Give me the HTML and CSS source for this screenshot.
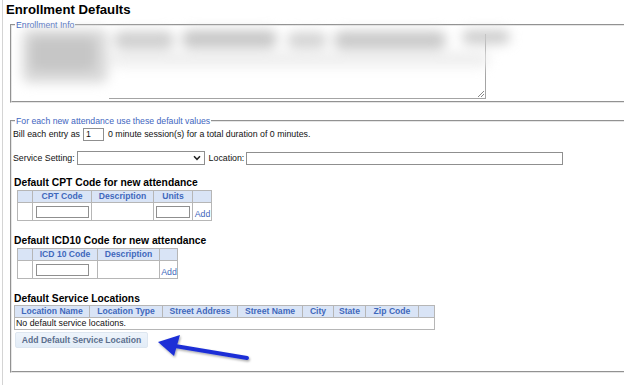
FILE: index.html
```html
<!DOCTYPE html>
<html>
<head>
<meta charset="utf-8">
<link rel="stylesheet" href="styles.css">
</head>
<body>
<div class="page">
  <h1 class="title">Enrollment Defaults</h1>
  <fieldset class="box box-info">
    <legend>Enrollment Info</legend>
    <div class="ta">
      <span class="grip"></span>
      <div class="mask"></div>
      <div class="mask-top"></div>
      <div class="blur">
        <span class="blob bl1"></span>
        <span class="blob bl2"></span>
        <span class="blob bl3"></span>
        <span class="blob bl4"></span>
        <span class="blob bl5"></span>
        <span class="blob bl6"></span>
        <span class="blob bl7"></span>
        <span class="blob bl8"></span>
      </div>
    </div>
  </fieldset>

  <fieldset class="box box-defaults">
    <legend>For each new attendance use these default values</legend>
    <div class="row row-bill">Bill each entry as <span class="inp inp-bill">1</span> 0 minute session(s) for a total duration of 0 minutes.</div>
    <div class="row row-svc">Service Setting: <span class="sel"><svg width="8" height="6" viewBox="0 0 8 6"><path d="M1 1.2 L4 4.3 L7 1.2" fill="none" stroke="#222" stroke-width="1.5"/></svg></span> Location: <span class="inp inp-loc"></span></div>

    <h2 class="sub sub-cpt">Default CPT Code for new attendance</h2>
    <table class="grid grid-cpt">
      <tr class="hd"><th class="c0"></th><th class="c1">CPT Code</th><th class="c2">Description</th><th class="c3">Units</th><th class="c4"></th></tr>
      <tr class="bd"><td></td><td><span class="inp inp-code"></span></td><td></td><td><span class="inp inp-units"></span></td><td class="add">Add</td></tr>
    </table>

    <h2 class="sub sub-icd">Default ICD10 Code for new attendance</h2>
    <table class="grid grid-icd">
      <tr class="hd"><th class="c0"></th><th class="i1">ICD 10 Code</th><th class="i2">Description</th><th class="i3"></th></tr>
      <tr class="bd"><td></td><td><span class="inp inp-code"></span></td><td></td><td class="add">Add</td></tr>
    </table>

    <h2 class="sub sub-loc">Default Service Locations</h2>
    <table class="grid grid-loc">
      <tr class="hd"><th class="l1">Location Name</th><th class="l2">Location Type</th><th class="l3">Street Address</th><th class="l4">Street Name</th><th class="l5">City</th><th class="l6">State</th><th class="l7">Zip Code</th><th class="l8"></th></tr>
      <tr><td colspan="8" class="empty">No default service locations.</td></tr>
    </table>
    <div class="btn">Add Default Service Location</div>
  </fieldset>

  <svg class="arrow" width="110" height="40" viewBox="0 0 110 40">
    <defs>
      <filter id="sh" x="-20%" y="-40%" width="140%" height="180%">
        <feDropShadow dx="1" dy="1.5" stdDeviation="1.2" flood-color="#000" flood-opacity="0.35"/>
      </filter>
    </defs>
    <g filter="url(#sh)">
      <path d="M94 27 L22 15" stroke="#1b2fd6" stroke-width="4" stroke-linecap="round" fill="none"/>
      <path d="M5 11 L27 4 L21 25 Z" fill="#1b2fd6"/>
    </g>
  </svg>
</div>
</body>
</html>
```

FILE: styles.css
```css
html, body {
  margin: 0;
  padding: 0;
  background: #fff;
  overflow: hidden;
}
body {
  font-family: "Liberation Sans", Arial, sans-serif;
  font-size: 8.8px;
  color: #111;
  width: 624px;
  height: 385px;
}
.page {
  position: relative;
  margin-left: 2px;
  border-left: 1px solid #d4d4d4;
  height: 385px;
  padding-top: 1px;
  box-sizing: border-box;
  overflow: hidden;
}
.title {
  margin: 0 0 0 3px;
  font-size: 13.2px;
  line-height: 18px;
  font-weight: bold;
  color: #000;
}
.box {
  margin: 0 0 0 7px;
  width: 660px;
  border: 2px groove #e6e6e6;
  border-right: none;
  box-sizing: border-box;
  min-width: 0;
  padding: 0;
}
.box legend {
  color: #4166c0;
  font-size: 8.7px;
  line-height: 10px;
  padding: 0 1px;
  margin-left: 3px;
}
.box-info {
  margin-top: 1px;
  height: 83px;
}
.ta {
  position: relative;
  margin-left: 11px;
  width: 463px;
  height: 69px;
  border: 1px solid #a4a4a4;
  box-sizing: border-box;
  background: #fff;
}
.mask {
  position: absolute;
  left: -2px;
  top: -2px;
  width: 87px;
  height: 71px;
  background: #fff;
}
.mask-top {
  position: absolute;
  left: 80px;
  top: -2px;
  width: 390px;
  height: 5px;
  background: #fff;
}
.blur {
  position: absolute;
  left: -2px;
  top: -2px;
  width: 492px;
  height: 56px;
  filter: blur(6px);
}
.blob {
  position: absolute;
  border-radius: 8px;
}
.bl1 { left: 0; top: 0; width: 86px; height: 54px; background: #dadada; }
.bl2 { left: 8px; top: 8px; width: 66px; height: 34px; background: #c6c6c6; }
.bl3 { left: 92px; top: 2px; width: 60px; height: 18px; background: #d0d0d0; }
.bl4 { left: 160px; top: 1px; width: 95px; height: 18px; background: #c8c8c8; }
.bl5 { left: 265px; top: 3px; width: 40px; height: 16px; background: #d4d4d4; }
.bl6 { left: 312px; top: 2px; width: 112px; height: 18px; background: #cacaca; }
.bl7 { left: 440px; top: 1px; width: 48px; height: 14px; background: #cdcdcd; }
.bl8 { left: 88px; top: 22px; width: 380px; height: 16px; background: #efefef; }
.grip {
  position: absolute;
  right: 1px;
  bottom: 1px;
  width: 6px;
  height: 6px;
  background: linear-gradient(135deg, transparent 45%, #888 46%, #888 54%, transparent 55%, transparent 70%, #888 71%, #888 79%, transparent 80%);
}
.box-defaults {
  margin-top: 13px;
  height: 257px;
}
.row {
  height: 14px;
  white-space: nowrap;
  display: flex;
  align-items: center;
  gap: 2px;
  padding-left: 1px;
}
.row-bill { margin-top: 1px; }
.row-svc { margin-top: 10px; }
.inp {
  display: inline-block;
  border: 1px solid #8f8f8f;
  box-sizing: border-box;
  background: #fff;
}
.inp-bill {
  width: 21px;
  height: 13px;
  line-height: 11px;
  padding-left: 2px;
  margin: 0 2px 0 1px;
}
.sel {
  width: 128px;
  height: 14px;
  border: 1px solid #8f8f8f;
  box-sizing: border-box;
  display: inline-flex;
  justify-content: flex-end;
  align-items: center;
  padding-right: 3px;
  margin-right: 2px;
}
.inp-loc {
  width: 317px;
  height: 13px;
}
.sub {
  margin: 0;
  font-size: 10.3px;
  line-height: 12px;
  font-weight: bold;
  color: #000;
  padding-left: 2px;
}
.sub-cpt { margin-top: 12px; }
.sub-icd { margin-top: 14px; }
.sub-loc { margin-top: 14px; }
.grid {
  border-collapse: collapse;
  margin-top: 1px;
  margin-left: 5px;
  table-layout: fixed;
}
.grid th, .grid td {
  border: 1px solid #b6b6b6;
  padding: 0;
}
.grid th {
  background: #d9e4f6;
  color: #3f68bc;
  font-size: 8.6px;
  font-weight: bold;
  height: 11px;
  line-height: 11px;
  text-align: center;
  white-space: nowrap;
}
.grid .bd td {
  height: 17px;
  text-align: center;
  vertical-align: bottom;
}
.grid .inp-code {
  width: 53px;
  height: 12px;
  display: block;
  margin: 0 0 2px 3px;
}
.grid .inp-units {
  width: 34px;
  height: 12px;
  display: block;
  margin: 0 0 2px 2px;
}
.grid .add {
  color: #3f68bc;
  font-size: 8.8px;
  line-height: 12px;
  text-align: left;
  padding-left: 1px;
}
.c0 { width: 14px; }
.c1 { width: 58px; }
.c2 { width: 61px; }
.c3 { width: 38px; }
.c4 { width: 18px; }
.i1 { width: 64px; }
.i2 { width: 61px; }
.i3 { width: 17px; }
.grid-loc { margin-left: 2px; margin-top: 0; }
.grid-loc th { height: 11px; line-height: 11px; }
.l1 { width: 74px; }
.l2 { width: 72px; }
.l3 { width: 74px; }
.l4 { width: 64px; }
.l5 { width: 30px; }
.l6 { width: 31px; }
.l7 { width: 52px; }
.l8 { width: 15px; }
.grid-loc td.empty {
  text-align: left;
  height: 11px;
  line-height: 11px;
  padding-left: 1px;
  color: #111;
  white-space: nowrap;
}
.btn {
  display: block;
  margin: 2px 0 0 3px;
  width: 133px;
  height: 16px;
  line-height: 15px;
  text-align: center;
  background: linear-gradient(#eef4fb, #e2ecf7);
  border: 1px solid #dde6f0;
  box-sizing: border-box;
  font-size: 8.6px;
  font-weight: bold;
  color: #5b6f8e;
  border-radius: 2px;
  white-space: nowrap;
}
.arrow {
  position: absolute;
  left: 150px;
  top: 331px;
}
```
